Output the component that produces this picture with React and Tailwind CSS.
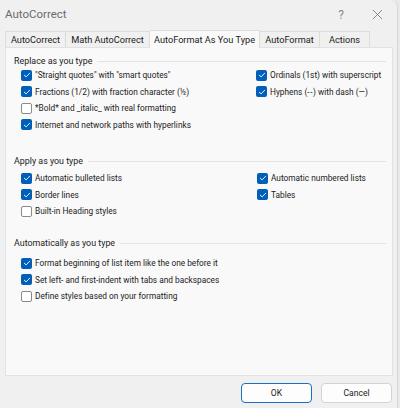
import React from "react";

const Check = ({ on }) =>
  on ? (
    <span className="w-[11px] h-[11px] rounded-[2px] bg-[#005fb8] flex items-center justify-center shrink-0">
      <svg width="8" height="8" viewBox="0 0 8 8" fill="none">
        <path d="M1.3 4.2 L3.1 5.9 L6.7 2.2" stroke="white" strokeWidth="0.9" strokeLinecap="round" strokeLinejoin="round" />
      </svg>
    </span>
  ) : (
    <span className="w-[11px] h-[11px] rounded-[2px] bg-white border border-[#8a8a8a] shrink-0" />
  );

const Row = ({ on, children }) => (
  <div className="h-[16.5px] flex items-center gap-[3px] whitespace-nowrap">
    <Check on={on} />
    <span>{children}</span>
  </div>
);

const Header = ({ children, className }) => (
  <div className={"h-[13px] flex items-center pl-[8px] pr-[6px] text-[8.9px] " + className}>
    <span className="whitespace-nowrap">{children}</span>
    <div className="flex-1 ml-[5px] h-px bg-[#e3e3e3]" />
  </div>
);

const Tab = ({ children, className }) => (
  <div className={"flex items-center justify-center border border-b-0 border-[#dcdcdc] whitespace-nowrap " + className}>{children}</div>
);

export default function App() {
  return (
    <div
      className="w-[400px] h-[408px] bg-[#e9e9e9] overflow-hidden text-[8.3px] text-[#1b1b1b] [font-variant-ligatures:none]"
      style={{ fontFamily: 'Roboto, "Noto Sans", sans-serif' }}
    >
      <div className="w-[398px] h-[408px] bg-[#f0f0f0] border-r border-[#d6d6d6] rounded-tr-[7px] flex flex-col">
        <div className="h-[29px] flex items-center pl-[5px] pr-[14px] text-[11.5px] text-[#6b6b6b]">
          <span className="flex-1">AutoCorrect</span>
          <span className="mr-[28px] text-[12px] text-[#8a8a8a]">?</span>
          <svg width="11" height="11" viewBox="0 0 11 11">
            <path d="M1 1 L10 10 M10 1 L1 10" stroke="#7a7a7a" strokeWidth="0.9" />
          </svg>
        </div>
        <div className="flex items-end h-[18px] pl-[5px] text-[9.2px]">
          <Tab className="h-[16px] w-[61px] bg-[#f0f0f0]">AutoCorrect</Tab>
          <Tab className="h-[16px] w-[84px] border-l-0 bg-[#f0f0f0]">Math AutoCorrect</Tab>
          <Tab className="h-[18px] w-[110px] border-l-0 bg-[#f9f9f9] relative top-px">AutoFormat As You Type</Tab>
          <Tab className="h-[16px] w-[60px] border-l-0 bg-[#f0f0f0]">AutoFormat</Tab>
          <Tab className="h-[16px] w-[50px] border-l-0 bg-[#f0f0f0]">Actions</Tab>
        </div>
        <div className="ml-[5px] w-[388px] h-[329px] bg-[#f9f9f9] border border-[#e2e2e2] pt-[7px]">
          <Header>Replace as you type</Header>
          <div className="grid grid-cols-[235px_1fr] pl-[15px] -mt-px">
            <div>
              <Row on>"Straight quotes" with "smart quotes"</Row>
              <Row on>Fractions (1/2) with fraction character (½)</Row>
              <Row>*Bold* and _italic_ with real formatting</Row>
              <Row on>Internet and network paths with hyperlinks</Row>
            </div>
            <div>
              <Row on>Ordinals (1st) with superscript</Row>
              <Row on>Hyphens (<span className="tracking-[0.6px]">--</span>) with dash (—)</Row>
            </div>
          </div>
          <Header className="mt-[22px]">Apply as you type</Header>
          <div className="grid grid-cols-[236px_1fr] pl-[15px] mt-[2px]">
            <div>
              <Row on>Automatic bulleted lists</Row>
              <Row on>Border lines</Row>
              <Row>Built-in Heading styles</Row>
            </div>
            <div>
              <Row on>Automatic numbered lists</Row>
              <Row on>Tables</Row>
            </div>
          </div>
          <Header className="mt-[17.5px]">Automatically as you type</Header>
          <div className="pl-[15px] mt-[5px]">
            <Row on>Format beginning of list item like the one before it</Row>
            <Row on>Set left- and first-indent with tabs and backspaces</Row>
            <Row>Define styles based on your formatting</Row>
          </div>
        </div>
        <div className="flex justify-end gap-[9px] pr-[5px] mt-[7px]">
          <button className="w-[71px] h-[20px] rounded-[4px] bg-[#fdfdfd] border-[1.5px] border-[#1a6fc4] text-[8.6px] leading-none">OK</button>
          <button className="w-[71px] h-[20px] rounded-[4px] bg-[#fdfdfd] border border-[#d3d3d3] text-[8.6px] leading-none">Cancel</button>
        </div>
      </div>
    </div>
  );
}
